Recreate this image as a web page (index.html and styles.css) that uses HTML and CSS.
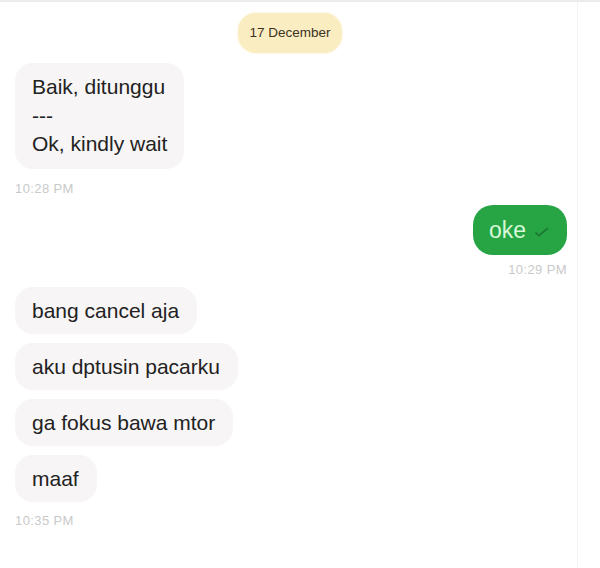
FILE: index.html
```html
<!DOCTYPE html>
<html>
<head>
<meta charset="utf-8">
<link rel="stylesheet" href="styles.css">
</head>
<body>
<div class="chat">
  <div class="date-row"><span class="date">17 December</span></div>

  <div class="msg in multi">Baik, ditunggu<br>---<br>Ok, kindly wait</div>
  <div class="time">10:28 PM</div>

  <div class="msg out">oke
    <svg class="check" width="14" height="10" viewBox="0 0 14 10"><path d="M1 6 L4 8.5 L12.5 1.5" fill="none" stroke="#1c7a33" stroke-width="1.8" stroke-linecap="round" stroke-linejoin="round"/></svg>
  </div>
  <div class="time right">10:29 PM</div>

  <div class="group">
    <div class="msg in">bang cancel aja</div>
    <div class="msg in">aku dptusin pacarku</div>
    <div class="msg in">ga fokus bawa mtor</div>
    <div class="msg in">maaf</div>
  </div>
  <div class="time last">10:35 PM</div>
</div>
</body>
</html>
```
FILE: styles.css
```css
html, body {
  margin: 0;
  background: #ffffff;
}
body {
  font-family: "Liberation Sans", Arial, sans-serif;
  border-top: 2px solid #ececef;
}
.chat {
  width: 578px;
  height: 566px;
  box-sizing: border-box;
  padding: 11px 10px 0 15px;
  display: flex;
  flex-direction: column;
  align-items: flex-start;
  border-right: 1px solid #f4f4f4;
}
.date-row {
  align-self: stretch;
  display: flex;
  justify-content: center;
  padding-right: 2px;
}
.date {
  background: #fbedc2;
  color: #3a3322;
  font-size: 13.5px;
  line-height: 16px;
  padding: 12px 11px;
  border-radius: 18px;
  box-shadow: 0 0 3px #fcf1d2;
}
.msg {
  font-size: 21px;
  color: #222222;
  line-height: 27px;
  padding: 10px 18px 10px 17px;
  border-radius: 18px;
  background: #f7f5f5;
}
.msg.multi {
  margin-top: 10px;
  line-height: 28.5px;
  padding: 10px 17px 10px 17px;
}
.time {
  font-size: 13px;
  line-height: 16px;
  color: #c9c9c9;
  margin-top: 12px;
  letter-spacing: 0.4px;
}
.msg.out {
  align-self: flex-end;
  margin-top: 8px;
  background: #27a545;
  color: #d8f8d8;
  font-size: 23px;
  line-height: 30px;
  padding: 10px 18px 10px 16px;
  border-radius: 20px;
  display: flex;
  align-items: center;
  gap: 9px;
}
.check {
  margin-top: 4px;
}
.time.right {
  align-self: flex-end;
  margin-top: 7px;
}
.group {
  margin-top: 9px;
  display: flex;
  flex-direction: column;
  align-items: flex-start;
  gap: 9px;
}
.time.last {
  margin-top: 11px;
}
```
